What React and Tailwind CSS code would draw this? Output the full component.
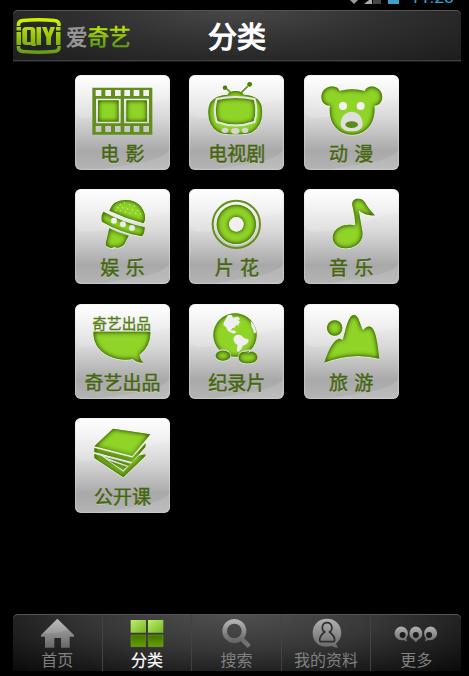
import React from "react";

const CJK = "font-['Noto_Sans_CJK_SC',sans-serif]";

function Defs() {
  return (
    <svg width="0" height="0" className="absolute">
      <defs>
        <filter id="inset" x="-50%" y="-50%" width="200%" height="200%" colorInterpolationFilters="sRGB">
          <feComponentTransfer in="SourceAlpha" result="inv">
            <feFuncA type="linear" slope="-1" intercept="1" />
          </feComponentTransfer>
          <feGaussianBlur in="inv" stdDeviation="8.5" result="blur" />
          <feComponentTransfer in="blur" result="strong">
            <feFuncA type="linear" slope="2" />
          </feComponentTransfer>
          <feFlood floodColor="#4f7d0c" />
          <feComposite in2="strong" operator="in" />
          <feComposite in2="SourceAlpha" operator="in" result="shade" />
          <feOffset in="SourceAlpha" dx="0" dy="3" result="off" />
          <feFlood floodColor="#ffffff" floodOpacity="0.5" />
          <feComposite in2="off" operator="in" result="light" />
          <feMerge>
            <feMergeNode in="light" />
            <feMergeNode in="SourceGraphic" />
            <feMergeNode in="shade" />
          </feMerge>
        </filter>
        <linearGradient id="limeText" gradientUnits="userSpaceOnUse" x1="0" y1="26" x2="0" y2="46">
          <stop offset="0" stopColor="#c5ee00" />
          <stop offset="1" stopColor="#5f9d16" />
        </linearGradient>
        <linearGradient id="limeLogo" gradientUnits="userSpaceOnUse" x1="0" y1="18" x2="0" y2="54">
          <stop offset="0" stopColor="#d3f500" />
          <stop offset="1" stopColor="#62981a" />
        </linearGradient>
        <linearGradient id="grey" x1="0" y1="0" x2="0" y2="1">
          <stop offset="0" stopColor="#b2b2b2" />
          <stop offset="1" stopColor="#686868" />
        </linearGradient>
        <linearGradient id="litTop" x1="0" y1="0" x2="1" y2="1">
          <stop offset="0" stopColor="#bdf070" />
          <stop offset="1" stopColor="#78b51f" />
        </linearGradient>
        <linearGradient id="litLow" x1="0" y1="0" x2="0" y2="1">
          <stop offset="0" stopColor="#447000" />
          <stop offset="1" stopColor="#66a000" />
        </linearGradient>
      </defs>
    </svg>
  );
}

const G = "#90d428";

const Film = () => (
  <>
    <g filter="url(#inset)" fill={G}>
      <rect x="98" y="104" width="62" height="64" />
      <rect x="183" y="104" width="62" height="64" />
    </g>
    <path
      fill="#628f1b"
      fillRule="evenodd"
      d="M81 66H261V207H81Z M92 99V173H166V99Z M176 99V173H251V99Z M91 73h17v18h-17z M120 73h17v18h-17z M149 73h17v18h-17z M177 73h17v18h-17z M205 73h17v18h-17z M234 73h17v18h-17z M91 181h17v18h-17z M120 181h17v18h-17z M149 181h17v18h-17z M177 181h17v18h-17z M205 181h17v18h-17z M234 181h17v18h-17z"
    />
  </>
);

const Tv = () => (
  <>
    <path d="M138 66L157 83M211 56L183 84" stroke="#66911f" strokeWidth="5" />
    <g filter="url(#inset)" fill={G}>
      <circle cx="137" cy="66" r="6.5" />
      <circle cx="211" cy="56" r="7" />
      <path d="M145 87Q151 76 169 76Q187 76 193 87Q246 90 248 132Q251 180 219 199Q210 206 168 206Q126 206 117 199Q85 180 87 135Q88 91 145 87Z" />
    </g>
    <path filter="url(#inset)" fill={G} d="M115 103Q168 91 223 103Q233 135 223 167Q168 186 115 167Q104 135 115 103Z" />
    <path d="M112 100Q168 88 226 100Q236 135 226 169Q168 190 112 169Q101 135 112 100Z" fill="none" stroke="#e4e4e4" strokeWidth="6" />
    <ellipse cx="137" cy="194" rx="10" ry="8" fill="#d5d5d5" />
    <ellipse cx="168" cy="196" rx="13" ry="9" fill="#d5d5d5" />
    <ellipse cx="197" cy="194" rx="10" ry="8" fill="#d5d5d5" />
  </>
);

const Bear = () => (
  <>
    <path
      filter="url(#inset)"
      fill={G}
      fillRule="evenodd"
      d="M136 76Q173 66 211 76C218 57 248 58 260 79C270 99 258 120 240 120C245 166 220 207 173 207C128 207 101 168 107 120C82 120 76 94 86 77C97 58 130 58 136 76Z"
    />
    <circle cx="146" cy="121" r="12" fill="#f2f2f2" />
    <circle cx="199" cy="121" r="12" fill="#f2f2f2" />
    <path d="M172 138C191 138 205 153 205 174C205 190 191 197 172 197C153 197 139 190 139 174C139 153 153 138 172 138Z" fill="#dedede" />
    <ellipse cx="172" cy="177" rx="19" ry="10" fill="#5c8c16" />
  </>
);

const DOTS = [[165, 75], [178, 70], [193, 75], [207, 79], [157, 84], [172, 84], [187, 87], [201, 91], [218, 93], [165, 93], [180, 97], [194, 101], [211, 101], [225, 103], [152, 92]];

const Mic = () => (
  <>
    <g filter="url(#inset)" fill={G}>
      <path d="M132 93Q144 60 182 61Q226 62 238 104Q241 121 235 131Q183 117 132 93Z" />
      <path d="M114 96Q172 128 238 143Q239 159 230 170Q166 159 110 126Q106 109 114 96Z" />
      <path d="M132 146Q158 160 190 168L176 195Q161 208 149 202Q140 209 123 199Q120 192 124 181Z" />
    </g>
    {DOTS.map(([x, y]) => (
      <circle key={x + "-" + y} cx={x} cy={y} r="2" fill="#d3ec9c" />
    ))}
    <circle cx="146" cy="123" r="9" fill="#f0f0f0" />
    <circle cx="173" cy="134" r="9" fill="#ececec" />
    <circle cx="200" cy="145" r="9" fill="#e8e8e8" />
    <circle cx="145" cy="205" r="3" fill="#e2e2e2" />
  </>
);

const Disc = () => (
  <>
    <circle cx="171" cy="134" r="71" fill="none" stroke="#648f1c" strokeWidth="6" />
    <path filter="url(#inset)" fill={G} fillRule="evenodd" d="M112 134a59 59 0 1 0 118 0a59 59 0 1 0 -118 0Z M149 134a22 22 0 1 1 44 0a22 22 0 1 1 -44 0Z" />
    <circle cx="171" cy="134" r="22" fill="#f0f0f0" />
  </>
);

const Note = () => (
  <path
    filter="url(#inset)"
    fill={G}
    d="M174 76C171 52 203 53 211 67C221 84 226 91 242 107Q213 110 193 92L204 156C209 191 177 207 153 206C126 205 110 186 117 164C125 140 155 131 183 137L181 111Z"
  />
);

const Bowl = () => (
  <>
    <text x="81" y="102" fontSize="46" fill="#557e14" stroke="#557e14" strokeWidth="1" textLength="176" lengthAdjust="spacingAndGlyphs" className={CJK}>奇艺出品</text>
    <path filter="url(#inset)" fill={G} d="M84 111H255Q257 153 222 181Q225 198 235 204Q215 205 202 193Q174 199 146 190Q84 169 84 111Z" />
  </>
);

const Globe = () => (
  <>
    <g filter="url(#inset)" fill={G}>
      <circle cx="167" cy="121" r="65" />
    </g>
    <path
      fill="#efefef"
      d="M145 62L157 60L161 69L176 66L182 72L177 78L184 83L177 87L180 93L171 91L165 99L158 101L155 108L164 107L172 112L163 117L152 112L145 108L140 97L132 91L134 82L139 74Z M166 124Q175 118 185 122L194 130L208 135Q209 143 201 149L191 153L184 166L176 173L172 165L175 151L166 145L162 133Z M214 79Q229 91 231 114L224 116L220 102L216 95Z M166 71L175 69L173 77Z"
    />
    <path d="M108 176Q116 166 131 166Q148 166 154 183M178 186Q180 171 197 169Q219 162 232 176" fill="none" stroke="#d4d4d4" strokeWidth="4" />
    <g filter="url(#inset)" fill={G}>
      <ellipse cx="131" cy="183" rx="22" ry="15" />
      <path d="M178 189C178 175 190 170 198 173Q202 176 207 174C220 167 233 176 234 187C234 201 221 206 206 206C190 206 178 201 178 189Z" />
    </g>
  </>
);

const Hills = () => (
  <g filter="url(#inset)" fill={G}>
    <circle cx="121" cy="100" r="23" />
    <path d="M90 204C97 184 111 142 132 133Q140 131 145 137C152 118 160 61 179 61C194 61 198 95 206 107Q217 93 228 96C246 101 251 160 255 192Q174 171 90 204Z" />
  </g>
);

const Books = () => (
  <g filter="url(#inset)" fill={G}>
    <path d="M87 113L143 60L255 77L201 142Z" />
    <path d="M87 118L201 147L241 104L240 115L201 160L87 130Z" />
    <path d="M87 136L108 142L123 153L174 190L220 141L240 137L240 142L174 206L87 148Z" />
    <path d="M116 144L196 165L190 172Z" />
    <path d="M132 157L185 174L173 184Z" />
  </g>
);

const tiles = [
  ["电 影", Film],
  ["电视剧", Tv],
  ["动 漫", Bear],
  ["娱 乐", Mic],
  ["片 花", Disc],
  ["音 乐", Note],
  ["奇艺出品", Bowl],
  ["纪录片", Globe],
  ["旅 游", Hills],
  ["公开课", Books],
];

function Tile({ label, Art }) {
  return (
    <div className="h-[95px] w-[95px] overflow-hidden rounded-[6px] bg-[linear-gradient(180deg,#ffffff_0%,#f4f4f4_15%,#d8d8d8_45%,#a9a9a9_80%,#b4b4b4_100%)] shadow-[inset_0_0_1px_1px_rgba(225,225,225,0.4)]">
      <svg viewBox="29 28 285 285" className="block h-[95px] w-[95px]">
        <path d="M28 28H315V100C240 105 170 156 60 156Q28 156 28 124Z" fill="#ffffff" opacity="0.18" />
        <path d="M315 248C300 276 250 290 150 303L100 313H315Z" fill="#ffffff" opacity="0.12" />
        <Art />
      </svg>
      <div className={"-mt-[30px] whitespace-pre text-center text-[19px] leading-[26px] text-[#45650f] [word-spacing:2px] [-webkit-text-stroke:0.45px_#45650f] [text-shadow:0_1px_0_rgba(225,225,225,0.5)] " + CJK}>
        {label}
      </div>
    </div>
  );
}

const HomeIcon = () => (
  <svg viewBox="120 36 105 93" className="h-[31px] w-[35px]">
    <path fill="url(#grey)" d="M172 38L222 87V92H209V125H183V96H163V125H135V92H123V87Z" />
    <path fill="#ffffff" opacity="0.12" d="M172 38L204 69Q180 85 128 82Z" />
  </svg>
);
const GridIcon = () => (
  <svg viewBox="388 39 105 87" className="h-[29px] w-[35px]">
    <path fill="url(#litTop)" d="M393 42H439V80H393Z" />
    <path fill="url(#litTop)" d="M445 42H491V80H445Z" />
    <path fill="url(#litLow)" stroke="#6c9f20" strokeWidth="2" d="M394 87H438V122H394ZM446 87H490V122H446Z" />
  </svg>
);
const SearchIcon = () => (
  <svg viewBox="-43 36 96 93" className="h-[31px] w-[32px]">
    <path d="M20 97L45 121" stroke="#707070" strokeWidth="14" />
    <circle cx="0" cy="75" r="29" fill="none" stroke="url(#grey)" strokeWidth="14" />
  </svg>
);
const ProfileIcon = () => (
  <svg viewBox="228 36 93 93" className="h-[31px] w-[31px]">
    <path fill="url(#grey)" d="M276 38C302 38 319 57 319 82Q318 100 303 113L309 125Q297 125 290 120C260 129 233 112 233 81C233 56 251 38 276 38Z" />
    <path fill="none" stroke="#303030" strokeWidth="5" d="M269 78C257 70 261 50 276 50C291 50 296 70 284 78C291 84 299 91 299 101Q299 107 293 107H260Q254 107 254 101C254 91 261 84 269 78Z" />
  </svg>
);
const MoreIcon = () => (
  <svg viewBox="476 58 136 54" className="h-[18px] w-[45px]">
    <path fill="url(#grey)" d="M497 62a21 21 0 0 1 21 21q0 9-5 15l2 10l-10-5a21 21 0 1 1-8-41Z M542 62a21 21 0 0 1 7 40l-7 8l-7-8a21 21 0 0 1 7-40Z M587 62a21 21 0 1 1-8 41l-9 5l2-10q-5-6-5-15a20 21 0 0 1 20-21Z" />
    <circle cx="502" cy="88" r="9" fill="#1c1c1c" />
    <circle cx="542" cy="88" r="9" fill="#1c1c1c" />
    <circle cx="582" cy="88" r="9" fill="#1c1c1c" />
  </svg>
);

const tabs = [
  ["首页", HomeIcon],
  ["分类", GridIcon],
  ["搜索", SearchIcon],
  ["我的资料", ProfileIcon],
  ["更多", MoreIcon],
];

export default function App() {
  return (
    <div className={"flex h-[676px] w-[469px] flex-col overflow-hidden bg-black " + CJK}>
      <Defs />
      <div className="h-[10px] shrink-0 overflow-hidden">
        <svg width="469" height="10" className="block">
          <path d="M350 0H358L354 4Z" fill="#999999" />
          <path d="M364 4L369 0V4Z M369 0h3v4h-3z" fill="#aaaaaa" />
          <path d="M373 0H381V4H373Z" fill="#454545" />
          <path d="M388 0H399V4H388Z" fill="#429fc6" />
          <text x="410" y="3" fontSize="17" textLength="44" lengthAdjust="spacingAndGlyphs" fill="#33a6d5" className="font-['Roboto',sans-serif]">11:28</text>
        </svg>
      </div>

      <header className="mx-[13px] grid h-[52px] w-[448px] shrink-0 grid-cols-[164px_120px_164px] items-center rounded-t-[5px] border-b border-[#191919] bg-[radial-gradient(ellipse_at_50%_0%,#484848_0%,#303030_48%,#1c1c1c_100%)] shadow-[inset_0_1px_0_#555555,inset_0_-1px_0_#404040]">
        <svg viewBox="13 10 130 52" className="h-[52px] w-[130px]">
          <path d="M18.500 26V24.500Q18.500 21 23 20.500Q39 19 54 20.500Q59 21 59 24.500V26M18.500 46V47.500Q18.500 51 23 51.500Q39 53 54 51.500Q59 51 59 47.500V46" fill="none" stroke="url(#limeLogo)" strokeWidth="3.600" />
          <path fill="url(#limeLogo)" d="M16.500 27H21V30.500H16.500Z M16.500 32H21V45H16.500Z M36.500 27H41V45H36.500Z M42 27H46.500L48.500 33L50.500 27H55L51 37.500V45H46.300V37.500Z M56 27H60.500V30.500H56Z M56 32H60.500V45H56Z" />
          <path fill="url(#limeLogo)" fillRule="evenodd" d="M26 27H31.500Q35.300 27 35.300 31V42L36 46H32L31 45H26Q22.300 45 22.300 41V31Q22.300 27 26 27Z M27 30V42H30.700V30Z" />
          <text x="66" y="44.500" fontSize="21.500" fill="#999999" stroke="#999999" strokeWidth="0.6">爱</text>
          <text x="87.500" y="44.500" fontSize="21.500" fill="url(#limeText)" stroke="url(#limeText)" strokeWidth="0.6">奇艺</text>
        </svg>
        <h1 className="pb-[2px] text-center text-[29px] font-normal leading-[40px] text-white [-webkit-text-stroke:1.2px_#ffffff]">分类</h1>
      </header>

      <main className="ml-[75px] mt-[13px] grid grow grid-cols-[95px_95px_95px] content-start gap-[19.3px]">
        {tiles.map(([label, Art]) => (
          <Tile key={label} label={label} Art={Art} />
        ))}
      </main>

      <nav className="mx-[13px] mb-[5px] grid h-[57px] w-[448px] shrink-0 grid-cols-5 overflow-hidden rounded-t-[5px] bg-[radial-gradient(ellipse_at_50%_0%,#505050_0%,#373737_45%,#090909_100%)] shadow-[inset_0_1px_0_#555555]">
        {tabs.map(([label, Icon], i) => (
          <div key={label} className={"flex flex-col items-center border-[#424242] " + (i < 4 ? "border-r" : "")}>
            <div className="flex h-[35px] items-center justify-center pt-[4px]">
              <Icon />
            </div>
            <span className={"whitespace-nowrap text-[16px] leading-[20px] " + (i === 1 ? "text-white [-webkit-text-stroke:0.2px_#ffffff]" : "text-[#808080]")}>
              {label}
            </span>
          </div>
        ))}
      </nav>
    </div>
  );
}
